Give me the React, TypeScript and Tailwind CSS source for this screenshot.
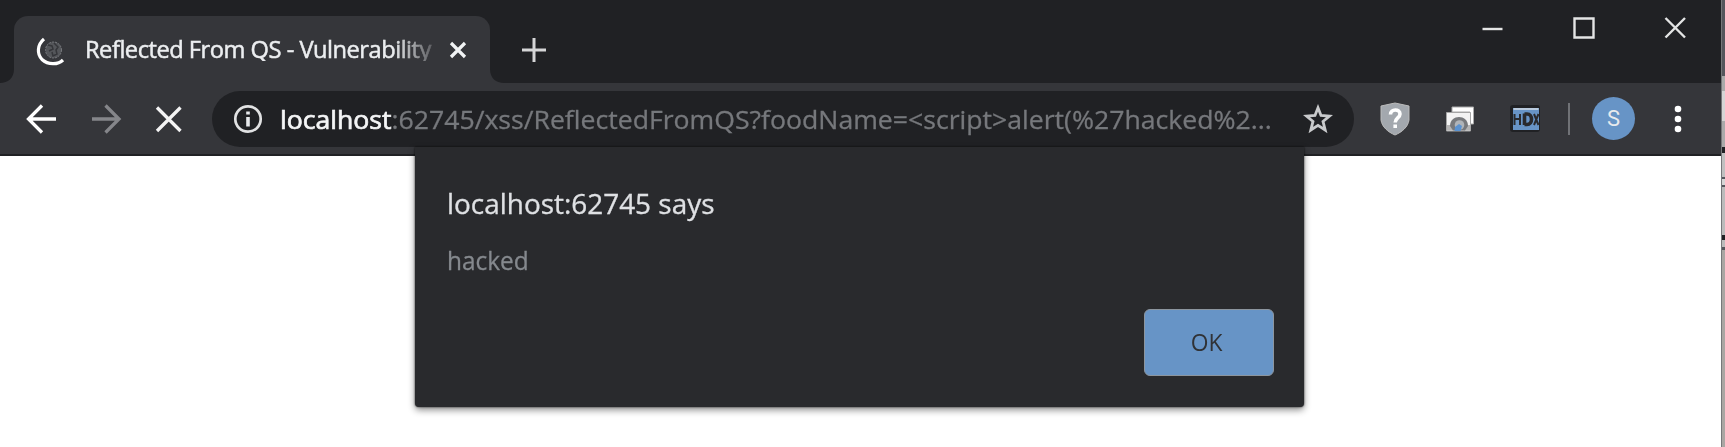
import React from "react";

const sans = "font-['Open_Sans','Noto_Sans',sans-serif] whitespace-pre leading-none";

function Tab() {
  return (
    <div className="relative ml-[14px] mt-4 flex h-[67px] w-[476px] items-center rounded-t-[14px] bg-[#35363a]">
      <svg className="absolute -left-[14px] bottom-0" width="14" height="14" viewBox="0 0 14 14">
        <path d="M14 0V14H0C8 14 14 9 14 0Z" fill="#35363a" />
      </svg>
      <svg className="absolute -right-[14px] bottom-0" width="14" height="14" viewBox="0 0 14 14">
        <path d="M0 0V14H14C6 14 0 9 0 0Z" fill="#35363a" />
      </svg>
      <svg className="ml-[22px] shrink-0" width="30" height="32" viewBox="0 0 30 32">
        <path d="M8 5C1 11 .8 20 6 25.500C12 31 22 31 27 26" fill="none" stroke="#fff" strokeWidth="3.200" />
        <circle cx="17.500" cy="16" r="8" fill="#54565a" stroke="#77797d" strokeDasharray="2 1" />
        <path d="M12 11l4 1 1 3-4 2M18 9l4 4-2 3 1 4-4 2-1-4" fill="none" stroke="#35363a" strokeWidth="1.500" />
      </svg>
      <div className="ml-[19px] h-9 w-[350px] overflow-hidden">
        <div className={`${sans} w-[400px] origin-left scale-x-[0.986] pt-[5px] text-[24px] tracking-[-0.5px] text-[#eceef0] [-webkit-text-stroke:0.5px_#eceef0] mask-r-from-[78%] mask-r-to-[91%]`}>
          Reflected From QS - Vulnerability
        </div>
      </div>
      <svg className="ml-[14px] shrink-0" width="18" height="18" viewBox="0 0 18 18">
        <path d="M2 2L16 16M16 2L2 16" stroke="#f1f3f4" strokeWidth="3.200" />
      </svg>
    </div>
  );
}

function TitleBar() {
  return (
    <div className="flex h-[83px] bg-[#202124]">
      <Tab />
      <svg className="ml-[31px] mt-[37px]" width="26" height="26" viewBox="0 0 26 26">
        <path d="M13 1V25M1 13H25" stroke="#d5d6d7" strokeWidth="3" />
      </svg>
      <div className="ml-auto mr-[30px] flex pt-[16px]">
        <svg width="214" height="26" viewBox="0 0 214 26" fill="none" stroke="#e4e5e5" strokeWidth="2.400">
          <path d="M5.500 13H25.500" />
          <path d="M97.500 2.500H116.500V21.500H97.500Z" />
          <path d="M188.500 2L208 21.500M208 2L188.500 21.500" />
        </svg>
      </div>
    </div>
  );
}

function Toolbar() {
  return (
    <div className="flex h-[73px] items-center border-b-2 border-[#202124] bg-[#35363a]">
      <svg className="ml-[26px] shrink-0" width="158" height="32" viewBox="0 0 158 32" fill="none" strokeWidth="3.300">
        <path d="M30 16H3M16 2.500L2.500 16L16 29.500" stroke="#fff" />
        <path d="M66 16H92M79.500 2.500L93 16L79.500 29.500" stroke="#85868a" />
        <path d="M131 4.500L154.500 28M154.500 4.500L131 28" stroke="#f4f4f4" />
      </svg>
      <div className="ml-[28px] flex h-[56px] w-[1142px] shrink-0 items-center rounded-full bg-[#202124]">
        <svg className="ml-[21px] shrink-0" width="30" height="30" viewBox="0 0 30 30">
          <circle cx="15" cy="15" r="12.700" fill="none" stroke="#e1e2e3" strokeWidth="2.700" />
          <path d="M15 7.500V10.500M15 13V22.500" stroke="#e8eaed" strokeWidth="3.600" />
        </svg>
        <div className="ml-[17px] w-[999px]">
          <div className={`${sans} inline-block origin-left scale-x-[1.024] pt-[3px] text-[26px] text-[#76787c] [-webkit-text-stroke:0.3px_#76787c]`}>
            <span className="text-[#f4f5f6] [-webkit-text-stroke:0.7px_#f4f5f6]">localhost</span>:62745/xss/ReflectedFromQS?foodName=&lt;script&gt;alert(%27hacked%2...
          </div>
        </div>
        <svg className="ml-[24px] shrink-0" width="30" height="30" viewBox="0 0 30 30">
          <path d="M15 3.800L18 11.500L26.500 12.100L20 17.400L22.200 26L15 21.300L7.800 26L10 17.400L3.500 12.100L12 11.500Z" fill="none" stroke="#c9cacc" strokeWidth="2.800" />
        </svg>
      </div>
      <svg className="ml-[26px] shrink-0" width="30" height="34" viewBox="0 0 30 34">
        <path d="M15 1L29 4V18C28 25 22 30 15 33C8 30 2 25 1 18V4Z" fill="#a3a8ae" stroke="#bcbcbc" />
        <path d="M10.500 12.500C10.500 6.500 20 6.500 20 12C20 16 15.200 16 15.200 20.500M15.200 22.500V26" fill="none" stroke="#fff" strokeWidth="3.600" />
      </svg>
      <svg className="ml-[35px] shrink-0" width="30" height="28" viewBox="0 0 30 28">
        <path d="M7 2H28.500V19H25V7H7Z" fill="#fff" stroke="#aaa" />
        <path d="M1.500 7.500H25.500V26H1.500Z" fill="#f3f3f3" stroke="#a5a5a5" />
        <path d="M2 20H8V25.500H2ZM19 20H25V25.500H19Z" fill="#b5b5b5" />
        <path d="M5 21C5 9 23 9 23 21L20 25.500H8Z" fill="#77797c" />
        <circle cx="14.500" cy="20" r="4.800" fill="#b0b4b8" />
        <path d="M9.500 26L10 22L14 19L17 21L15.500 26Z" fill="#5a92d0" />
      </svg>
      <svg className="ml-[35px] shrink-0" width="32" height="28" viewBox="0 0 32 28">
        <rect x="0" y="0" width="30" height="27" rx="3" fill="#202124" />
        <rect x="3" y="3" width="26" height="22" fill="#6794c6" />
        <path d="M3.500 4H28.500" stroke="#d5dce4" strokeWidth="1.500" />
        <path d="M4.500 9V20M4.500 14H9M10 9V20M24 9L28.500 20M28.500 9L24 20" fill="none" stroke="#292a2d" strokeWidth="2" />
        <path d="M14.500 8.500V20M14.500 9H17C23 9 23 19.500 17 19.500H14.500" fill="none" stroke="#292a2d" strokeWidth="3.600" />
      </svg>
      <div className="ml-[26px] h-[32px] w-[2px] shrink-0 bg-[#707276]" />
      <div className="ml-[22px] flex size-[43px] shrink-0 items-center justify-center rounded-full bg-[#6794c6] font-['Roboto',sans-serif] text-[22px] text-[#e8eaed]">S</div>
      <svg className="ml-[39px] shrink-0" width="8" height="30" viewBox="0 0 8 30" fill="#fff">
        <circle cx="4" cy="5" r="3.300" />
        <circle cx="4" cy="15" r="3.300" />
        <circle cx="4" cy="25" r="3.300" />
      </svg>
    </div>
  );
}

function AlertDialog() {
  return (
    <div className="absolute left-[415px] top-[147px] flex h-[260px] w-[889px] flex-col rounded-b-[4px] bg-[#292a2d] px-[32px] shadow-[0_3px_7px_rgba(0,0,0,0.45),0_0_2px_rgba(0,0,0,0.8)]">
      <div className={`${sans} mt-[42px] w-fit origin-left scale-x-[0.997] text-[28px] text-[#dfe1e4] [-webkit-text-stroke:0.3px_#dfe1e4]`}>localhost:62745 says</div>
      <div className={`${sans} mt-[30px] w-fit origin-left scale-x-[0.94] text-[26px] text-[#85898e] [-webkit-text-stroke:0.3px_#85898e]`}>hacked</div>
      <button className={`${sans} ml-auto mr-[-2px] mt-[36px] flex h-[67px] w-[130px] items-center justify-center rounded-[6px] border border-[#8c959e] bg-[#6794c6] pb-[2px] pr-[4px] text-[24px] text-[#303236]`}>
        <span className="scale-x-[0.95]">OK</span>
      </button>
    </div>
  );
}

export default function App() {
  return (
    <div className="relative flex h-[447px] w-[1725px] overflow-hidden bg-white">
      <div className="flex w-[1721px] shrink-0 flex-col">
        <TitleBar />
        <Toolbar />
      </div>
      <div className="flex w-[4px] flex-col border-l border-[#77787a] bg-[#aaa6a3]">
        <div className="h-[76px] bg-[#55565c]" />
        <div className="h-[15px] bg-[#aaa]" />
        <div className="h-[30px] bg-[#d5d5d5]" />
        <div className="h-[26px] bg-[#aaa]" />
        <div className="h-[6px] bg-[#202124]" />
        <div className="h-[24px] bg-[#c0c0c0]" />
        <div className="h-[2px] bg-[#55565c]" />
        <div className="h-[6px] bg-[#d5d5d5]" />
        <div className="h-[2px] bg-[#55565c]" />
        <div className="h-[48px] bg-[#bbb]" />
        <div className="h-[5px] bg-[#202124]" />
        <div className="h-[7px] bg-[#bbb]" />
        <div className="h-[3px] bg-[#55565c]" />
      </div>
      <AlertDialog />
    </div>
  );
}
